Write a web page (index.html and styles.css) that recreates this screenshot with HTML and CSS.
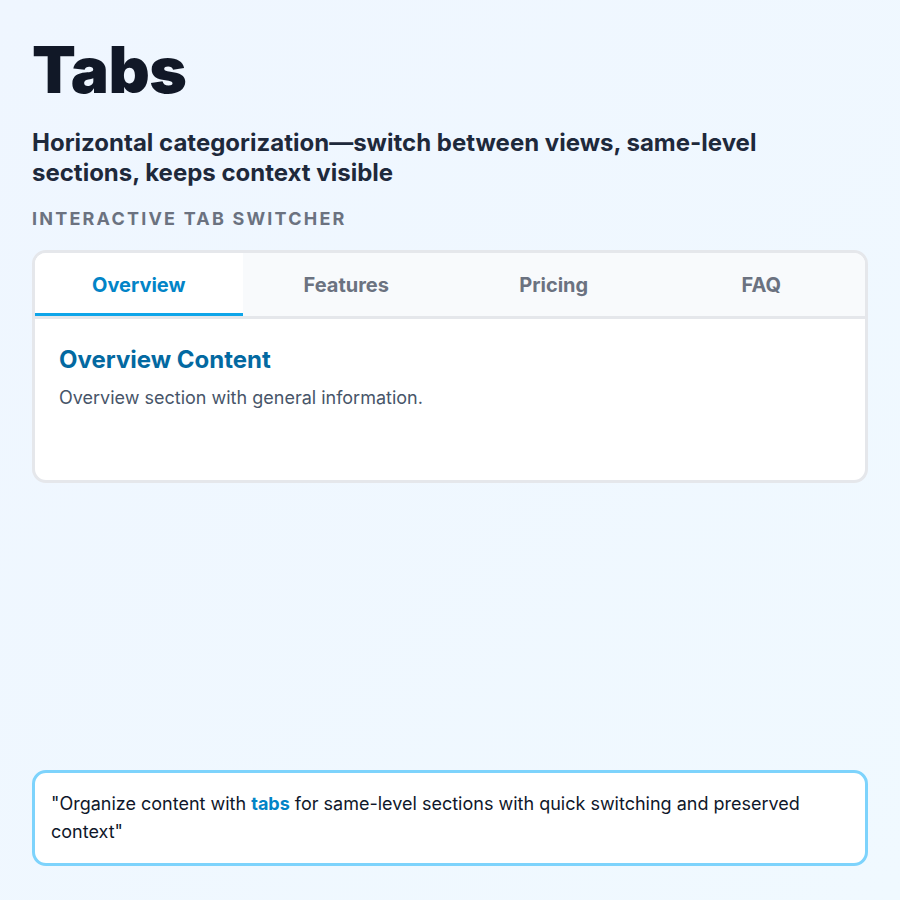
FILE: index.html
```html
<!DOCTYPE html>
<html>
<head>
<meta charset="utf-8">
<link rel="stylesheet" href="styles.css">
</head>
<body>
<div class="page">
  <h1 class="title">Tabs</h1>
  <p class="subtitle">Horizontal categorization—switch between views, same-level sections, keeps context visible</p>
  <div class="label">Interactive Tab Switcher</div>
  <div class="card">
    <div class="tabs">
      <div class="tab active">Overview</div>
      <div class="tab">Features</div>
      <div class="tab">Pricing</div>
      <div class="tab">FAQ</div>
    </div>
    <div class="panel">
      <h2 class="panel-title">Overview Content</h2>
      <p class="panel-text">Overview section with general information.</p>
    </div>
  </div>
  <div class="quote">"Organize content with <strong>tabs</strong> for same-level sections with quick switching and preserved context"</div>
</div>
</body>
</html>
```

FILE: styles.css
```css
* { box-sizing: border-box; }
html, body { margin: 0; padding: 0; }
body {
  width: 900px;
  height: 900px;
  background: linear-gradient(135deg, #eff6ff 0%, #f0f9ff 100%);
  font-family: Inter, "Noto Sans", sans-serif;
  color: #0f172a;
}
.page {
  height: 900px;
  padding: 32px 32px 34px;
  display: flex;
  flex-direction: column;
}
.title {
  margin: 0;
  font-size: 64px;
  line-height: 1.2;
  font-weight: 900;
  color: #111827;
  letter-spacing: -0.5px;
}
.subtitle {
  margin: 19px 0 0;
  font-size: 24px;
  line-height: 30px;
  font-weight: 700;
  color: #1e293b;
}
.label {
  margin-top: 19px;
  font-size: 18px;
  line-height: 24px;
  font-weight: 700;
  text-transform: uppercase;
  letter-spacing: 2.2px;
  color: #6b7280;
}
.card {
  margin-top: 19px;
  background: #ffffff;
  border: 3px solid #e5e7eb;
  border-radius: 14px;
  overflow: hidden;
}
.tabs {
  display: grid;
  grid-template-columns: repeat(4, 1fr);
  background: #f8fafc;
  border-bottom: 3px solid #e5e7eb;
}
.tab {
  height: 63px;
  padding-top: 4px;
  display: flex;
  align-items: center;
  justify-content: center;
  font-size: 20px;
  font-weight: 700;
  color: #6b7280;
  border-bottom: 3px solid transparent;
}
.tab.active {
  background: #ffffff;
  color: #0284c7;
  border-bottom-color: #0ea5e9;
}
.panel {
  padding: 26px 24px 0;
  height: 161px;
}
.panel-title {
  margin: 0;
  font-size: 24px;
  line-height: 30px;
  font-weight: 700;
  color: #0369a1;
}
.panel-text {
  margin: 9px 0 0;
  font-size: 18px;
  line-height: 28px;
  color: #475569;
}
.quote {
  margin-top: auto;
  background: #ffffff;
  border: 3px solid #7dd3fc;
  border-radius: 14px;
  padding: 17px 16px 17px;
  font-size: 18px;
  line-height: 28px;
  color: #0f172a;
}
.quote strong {
  color: #0284c7;
  font-weight: 700;
}
```
